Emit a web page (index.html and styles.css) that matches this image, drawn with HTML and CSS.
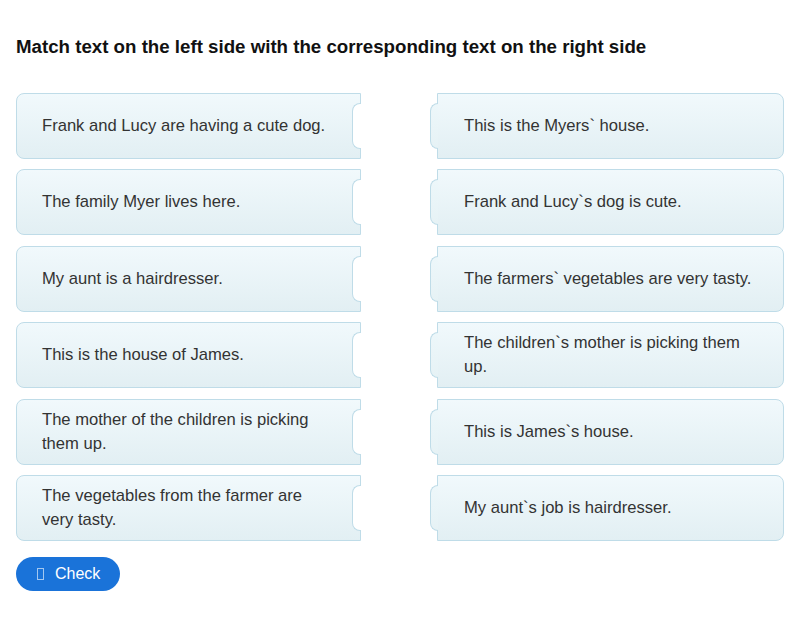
FILE: index.html
```html
<!DOCTYPE html>
<html>
<head>
<meta charset="utf-8">
<link rel="stylesheet" href="styles.css">
</head>
<body>
<div class="page">
  <h1 class="title">Match text on the left side with the corresponding text on the right side</h1>
  <div class="board">
    <div class="card left"><span>Frank and Lucy are having a cute dog.</span></div>
    <div class="card right"><span>This is the Myers` house.</span></div>
    <div class="card left"><span>The family Myer lives here.</span></div>
    <div class="card right"><span>Frank and Lucy`s dog is cute.</span></div>
    <div class="card left"><span>My aunt is a hairdresser.</span></div>
    <div class="card right"><span>The farmers` vegetables are very tasty.</span></div>
    <div class="card left"><span>This is the house of James.</span></div>
    <div class="card right"><span>The children`s mother is picking them up.</span></div>
    <div class="card left"><span>The mother of the children is picking them up.</span></div>
    <div class="card right"><span>This is James`s house.</span></div>
    <div class="card left"><span>The vegetables from the farmer are very tasty.</span></div>
    <div class="card right"><span>My aunt`s job is hairdresser.</span></div>
  </div>
  <button class="check"><span class="tofu"></span><span>Check</span></button>
</div>
</body>
</html>
```
FILE: styles.css
```css
html, body {
  margin: 0;
  padding: 0;
  background: #fff;
}
.page {
  padding: 16px 16px 0 16px;
  font-family: "Liberation Sans", Arial, sans-serif;
}
.title {
  margin: 19px 0 34px 0;
  font-size: 18.7px;
  line-height: 24px;
  font-weight: bold;
  color: #111;
}
.board {
  display: grid;
  grid-template-columns: 345px 1fr;
  column-gap: 76px;
  row-gap: 10.4px;
}
.card {
  position: relative;
  box-sizing: border-box;
  height: 66px;
  display: flex;
  align-items: center;
  border: 1px solid #bfdce8;
  background: linear-gradient(to bottom, #f1f9fc, #e2eff3);
  color: #333;
  font-size: 16.6px;
  line-height: 24px;
}
.card.left {
  border-radius: 8px 0 0 8px;
  padding: 0 28px 0 25px;
}
.card.right {
  border-radius: 0 8px 8px 0;
  padding: 0 24px 0 26px;
}
.card.left::after {
  content: "";
  position: absolute;
  right: -1px;
  top: 9px;
  bottom: 9px;
  width: 9px;
  box-sizing: border-box;
  background: #fff;
  border: 1px solid #bfdce8;
  border-right: none;
  border-radius: 8px 0 0 8px;
}
.card.right::before {
  content: "";
  position: absolute;
  left: -8px;
  top: 9px;
  bottom: 9px;
  width: 8px;
  box-sizing: border-box;
  background: linear-gradient(to bottom, #edf7fa, #e6f2f5);
  border: 1px solid #bfdce8;
  border-right: none;
  border-radius: 8px 0 0 8px;
}
.check {
  margin-top: 16px;
  height: 34px;
  display: inline-flex;
  align-items: center;
  gap: 11px;
  padding: 0 20px 0 21px;
  border: none;
  border-radius: 17px;
  background: #1a73d9;
  color: #fff;
  font-family: "Liberation Sans", Arial, sans-serif;
  font-size: 16px;
}
.tofu {
  display: inline-block;
  width: 5px;
  height: 10px;
  border: 1px solid rgba(255,255,255,0.6);
}
```
